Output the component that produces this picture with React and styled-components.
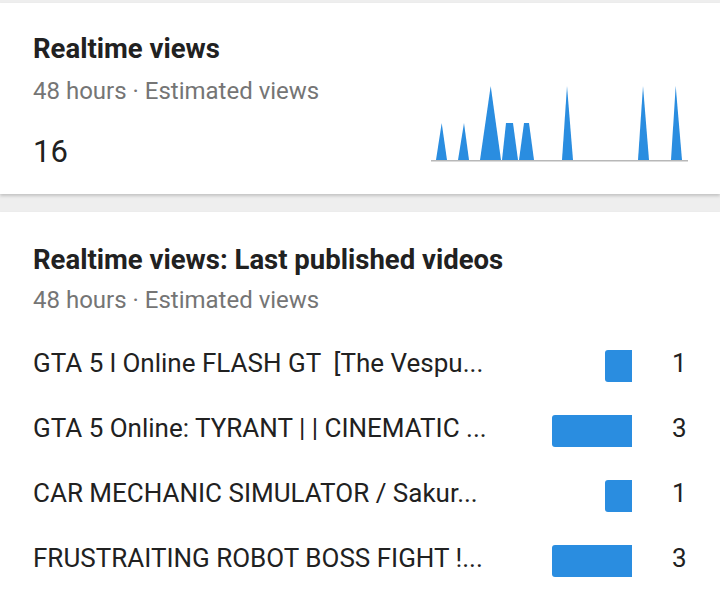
import React from "react";
import styled, { createGlobalStyle } from "styled-components";

const GlobalStyle = createGlobalStyle`
  body {
    margin: 0;
    background: #eeeeee;
    font-family: Roboto, "Liberation Sans", sans-serif;
    color: #212121;
  }
`;

const Page = styled.div`
  width: 720px;
  height: 603px;
  overflow: hidden;
  padding-top: 3px;
  box-sizing: border-box;
  display: flex;
  flex-direction: column;
  gap: 18px;
`;

const Card = styled.section`
  background: #fff;
  box-shadow: 0 2px 3px rgba(0, 0, 0, 0.18);
  padding: ${(p) => p.$pad};
  box-sizing: border-box;
  height: ${(p) => p.$height || "auto"};
  flex: ${(p) => (p.$grow ? 1 : "none")};
`;

const Summary = styled.div`
  display: flex;
  justify-content: space-between;
  height: 100%;
`;

const SummaryText = styled.div`
  padding-top: 30px;
`;

const Title = styled.h2`
  margin: 0;
  font-size: 27.5px;
  font-weight: 700;
  line-height: 32px;
  color: #212121;
`;

const Sub = styled.div`
  margin-top: ${(p) => p.$gap || "12px"};
  font-size: 24px;
  line-height: 28px;
  color: #757575;
`;

const Big = styled.div`
  margin-top: 29px;
  font-size: 31px;
  line-height: 36px;
  color: #212121;
`;

const ChartBox = styled.div`
  align-self: flex-end;
  margin-bottom: 32px;
  line-height: 0;
`;

const Rows = styled.div`
  margin-top: 33px;
  display: flex;
  flex-direction: column;
  gap: 33px;
`;

const Row = styled.div`
  display: grid;
  grid-template-columns: 1fr 80px 56px;
  grid-template-rows: 32px;
  align-items: center;
`;

const VideoTitle = styled.div`
  font-size: 26px;
  white-space: pre;
  overflow: hidden;
  text-overflow: ellipsis;
  color: #212121;
  padding-right: 12px;
`;

const BarCell = styled.div`
  display: flex;
  justify-content: flex-end;
  align-self: start;
  margin-top: 3px;
`;

const Bar = styled.div`
  height: 32px;
  background: #2a8de0;
  border-radius: 3px 0 0 3px;
`;

const Count = styled.div`
  font-size: 26px;
  color: #212121;
  padding-left: 40px;
`;

const peaks = [
  [437, 442.7, 442.7, 448, 123],
  [459, 465, 465, 470, 123],
  [481, 491.7, 491.7, 502, 86],
  [503, 507, 514, 519, 123],
  [520, 525, 530, 535, 123],
  [563, 568, 568, 574, 86],
  [639, 644, 644, 650, 86],
  [672, 676.7, 676.7, 683, 86],
];

function Spark() {
  const ox = 432;
  const oy = 80;
  return (
    <svg width="257" height="82" viewBox="0 0 257 82">
      {peaks.map(([a, b, c, d, top], i) => (
        <polygon
          key={i}
          fill="#2a8de0"
          points={`${a - ox},${160 - oy} ${b - ox},${top - oy} ${c - ox},${top - oy} ${d - ox},${160 - oy}`}
        />
      ))}
      <rect x="0" y={160 - oy} width="257" height="1.5" fill="#b8b8b8" />
    </svg>
  );
}

const videos = [
  { title: "GTA 5 l Online FLASH GT  [The Vespu...", views: 1 },
  { title: "GTA 5 Online: TYRANT | | CINEMATIC ...", views: 3 },
  { title: "CAR MECHANIC SIMULATOR / Sakur...", views: 1 },
  { title: "FRUSTRAITING ROBOT BOSS FIGHT !...", views: 3 },
];

export default function App() {
  return (
    <>
      <GlobalStyle />
      <Page>
        <Card $height="191px" $pad="0 32px 0 33px">
          <Summary>
            <SummaryText>
              <Title>Realtime views</Title>
              <Sub>48 hours · Estimated views</Sub>
              <Big>16</Big>
            </SummaryText>
            <ChartBox>
              <Spark />
            </ChartBox>
          </Summary>
        </Card>
        <Card $grow $pad="32px 32px 0 33px">
          <Title>Realtime views: Last published videos</Title>
          <Sub $gap="10px">48 hours · Estimated views</Sub>
          <Rows>
            {videos.map((v, i) => (
              <Row key={i}>
                <VideoTitle>{v.title}</VideoTitle>
                <BarCell>
                  <Bar style={{ width: v.views === 1 ? 27 : 80 }} />
                </BarCell>
                <Count>{v.views}</Count>
              </Row>
            ))}
          </Rows>
        </Card>
      </Page>
    </>
  );
}
